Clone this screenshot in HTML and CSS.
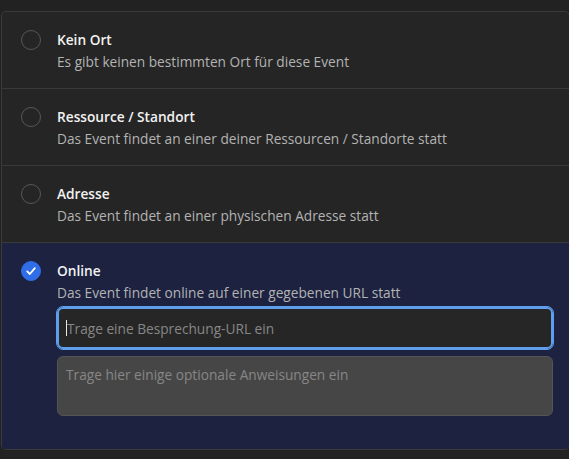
FILE: index.html
```html
<!DOCTYPE html>
<html lang="de">
<head>
<meta charset="utf-8">
<link rel="stylesheet" href="styles.css">
</head>
<body>
<div class="card">
  <div class="row">
    <span class="radio"></span>
    <div class="body">
      <div class="title">Kein Ort</div>
      <div class="desc">Es gibt keinen bestimmten Ort für diese Event</div>
    </div>
  </div>
  <div class="row">
    <span class="radio"></span>
    <div class="body">
      <div class="title">Ressource / Standort</div>
      <div class="desc">Das Event findet an einer deiner Ressourcen / Standorte statt</div>
    </div>
  </div>
  <div class="row">
    <span class="radio"></span>
    <div class="body">
      <div class="title">Adresse</div>
      <div class="desc">Das Event findet an einer physischen Adresse statt</div>
    </div>
  </div>
  <div class="row selected">
    <span class="radio checked">
      <svg viewBox="0 0 20 20" width="20" height="20"><path d="M6.2 10.4 L8.9 13 L13.8 7.2" fill="none" stroke="#fff" stroke-width="1.8" stroke-linecap="round" stroke-linejoin="round"/></svg>
    </span>
    <div class="body">
      <div class="title">Online</div>
      <div class="desc">Das Event findet online auf einer gegebenen URL statt</div>
      <div class="url"><span class="caret"></span><span class="ph">Trage eine Besprechung-URL ein</span></div>
      <div class="notes"><span class="ph">Trage hier einige optionale Anweisungen ein</span></div>
    </div>
  </div>
</div>
</body>
</html>
```
FILE: styles.css
```css
html, body {
  margin: 0;
  padding: 0;
  background: #222222;
  font-family: "Open Sans", "Noto Sans", sans-serif;
  font-size: 13.7px;
}
body {
  padding: 11px 0 0 1px;
  height: 459px;
  box-sizing: border-box;
  overflow: hidden;
}
.card {
  width: 567px;
  border: 1px solid #3a3a3a;
  border-radius: 5px;
  background: #252525;
  overflow: hidden;
}
.row {
  display: flex;
  align-items: flex-start;
  gap: 16px;
  padding: 17px 16px 15px 19px;
  border-top: 1px solid #3a3a3a;
}
.row:first-child {
  border-top: none;
}
.radio {
  flex: none;
  width: 20px;
  height: 20px;
  box-sizing: border-box;
  border: 1px solid #575757;
  border-radius: 50%;
  margin-top: 1px;
  display: flex;
}
.radio.checked {
  background: #2f6ee6;
  border-color: #2f6ee6;
}
.radio svg {
  margin: -1px;
}
.body {
  flex: 1;
  min-width: 0;
}
.title {
  color: #f2f2f2;
  font-weight: 600;
  line-height: 22px;
}
.desc {
  color: #b3b3b3;
  line-height: 22px;
}
.selected {
  background: #1c2240;
  padding-bottom: 33px;
}
.url {
  margin-top: 3px;
  height: 42px;
  box-sizing: border-box;
  border: 2px solid #5f9ded;
  outline: 1px solid #5f9ded;
  border-radius: 6px;
  background: #262626;
  display: flex;
  align-items: center;
  padding-left: 7px;
}
.caret {
  width: 1px;
  height: 16px;
  background: #e8e8e8;
}
.ph {
  color: #878787;
}
.notes {
  margin-top: 7px;
  height: 60px;
  box-sizing: border-box;
  border: 1px solid #555555;
  border-radius: 6px;
  background: #464646;
  padding: 8px 8px;
  line-height: 20px;
}
```
